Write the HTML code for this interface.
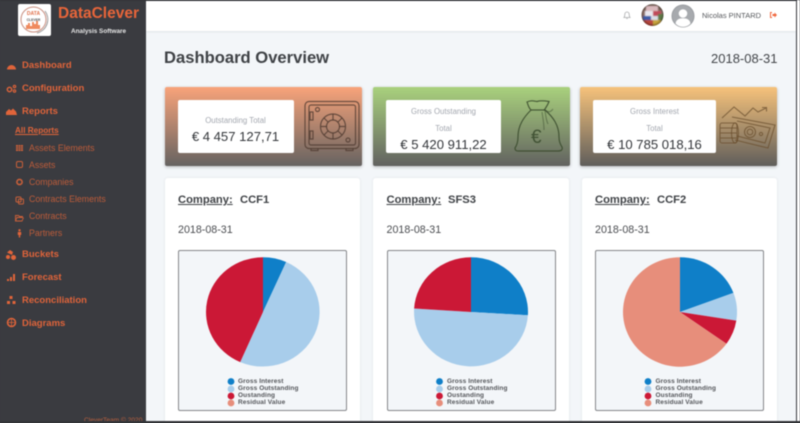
<!DOCTYPE html>
<html lang="en"><head><meta charset="utf-8"><title>DataClever</title>
<style>
html,body{margin:0;padding:0;width:800px;height:423px;overflow:hidden;background:#3a3b40}
body{font-family:"Liberation Sans",sans-serif;position:relative}
#w{position:absolute;left:0;top:0;width:800px;height:423px;overflow:hidden;filter:blur(.4px)}
.a{position:absolute;white-space:nowrap;line-height:1}
.box{position:absolute}
.m{color:#e0643a;font-weight:bold;font-size:9.5px;left:22px}
.s{color:#bd5c3a;font-size:8.8px;left:29px}
.i{position:absolute}
.card{position:absolute;top:87px;height:79px;border-radius:2px;box-shadow:0 1px 3px rgba(0,0,0,.25)}
.w{position:absolute;top:100px;height:53px;background:#fff;border-radius:2px}
.lab{color:#a4a8b0;font-size:7.8px;text-align:center}
.val{color:#33363a;font-size:13.1px;text-align:center}
.c{position:absolute;top:178px;height:250px;background:#fff;border-radius:3px;box-shadow:0 0 3px rgba(0,0,0,.08)}
.cb{position:absolute;top:250px;height:159px;background:#f3f6f9;border:1px solid #85878a;border-radius:2px}
.t{font-size:11.2px;font-weight:bold;color:#3f4246}
.d{font-size:10.7px;color:#4a4c50}
.l{font-size:6.5px;font-weight:bold;color:#55575b;letter-spacing:.1px}
</style></head><body><div id="w">
<div class="box" style="left:146px;top:1px;width:650px;height:421px;background:#f3f6f9"></div>
<div class="box" style="left:146px;top:1px;width:650px;height:30px;background:#fff;box-shadow:0 1px 2px rgba(0,0,0,.08)"></div>
<div class="box" style="left:0;top:0;width:146px;height:423px;background:#3a3b40"></div>
<div class="box" style="left:0;top:0;width:800px;height:1px;background:#333438"></div>
<div class="box" style="left:797px;top:0;width:3px;height:423px;background:#fff"></div>

<!-- logo -->
<div class="box" style="left:17.5px;top:3.5px;width:33.5px;height:32px;background:#fff;border-radius:2px"></div>
<svg class="i" style="left:17px;top:3px" width="35" height="33" viewBox="0 0 35 33">
<circle cx="16.5" cy="16.5" r="12.5" fill="none" stroke="#c98f80" stroke-width="1"/>
<path d="M28 8a14 14 0 0 1-8 22" fill="none" stroke="#999" stroke-width="1"/>
<text x="16.5" y="12" font-family="Liberation Sans" font-size="5" font-weight="bold" text-anchor="middle" fill="#e0704a">DATA</text>
<text x="16.5" y="18" font-family="Liberation Sans" font-size="3.4" font-weight="bold" text-anchor="middle" fill="#555">CLEVER</text>
<path d="M9 26v-4h2v-2h2v3h2v-4h2v2h2v-3h2v4h2v4z" fill="#ef8a5e"/>
</svg>
<div class="a" style="left:58px;top:6px;font-size:15.5px;font-weight:bold;color:#e8653a">DataClever</div>
<div class="a" style="left:71px;top:29px;font-size:6.4px;font-weight:bold;color:#e6e6e6">Analysis Software</div>

<!-- menu -->
<div class="a m" style="top:61px">Dashboard</div>
<div class="a m" style="top:84px">Configuration</div>
<div class="a m" style="top:107px">Reports</div>
<div class="a" style="left:15px;top:127px;font-size:8.2px;font-weight:bold;color:#e0643a;text-decoration:underline">All Reports</div>
<div class="a s" style="top:143.5px">Assets Elements</div>
<div class="a s" style="top:160.5px">Assets</div>
<div class="a s" style="top:178px">Companies</div>
<div class="a s" style="top:195px">Contracts Elements</div>
<div class="a s" style="top:212px">Contracts</div>
<div class="a s" style="top:229px">Partners</div>
<div class="a m" style="top:249.5px">Buckets</div>
<div class="a m" style="top:272.5px">Forecast</div>
<div class="a m" style="top:295.5px">Reconciliation</div>
<div class="a m" style="top:318.5px">Diagrams</div>
<div class="a" style="left:84px;top:418px;font-size:6.6px;color:#b8603e">CleverTeam © 2020</div>

<!-- menu icons -->
<svg class="i" style="left:0;top:55px" width="30" height="290" viewBox="0 55 30 290">
<g fill="#e0643a">
<path d="M7 69.500a4.500 4.500 0 1 1 9 0z"/>
<path d="M6 115v-3l3-3 2 1.500 2-2 3 3 1 3.500z"/>
<path d="M7 252.500l3-2.500 3 2-1 3zM6 257a2 2 0 1 1 4 0 2 2 0 0 1-4 0zM11 257.500a2.500 2.500 0 1 1 5 0 2.500 2.500 0 0 1-5 0z"/>
<path d="M7 281h2v-2h-2zM10 281h2v-4h-2zM13 281h2v-7h-2z"/>
<path d="M9.500 296h3v3h-3zM7 301h3v3H7zM12.500 301h3v3h-3z"/>
</g>
<circle cx="9.500" cy="89.500" r="2.200" fill="none" stroke="#e0643a" stroke-width="1.400"/>
<circle cx="14.500" cy="86.500" r="1.200" fill="none" stroke="#e0643a" stroke-width="1.100"/>
<circle cx="14.500" cy="91" r="1.200" fill="none" stroke="#e0643a" stroke-width="1.100"/>
<circle cx="11.500" cy="322.500" r="4" fill="none" stroke="#e0643a" stroke-width="1.500"/>
<path d="M7.500 322.500h8M11.500 318.500v8" stroke="#e0643a" stroke-width=".8"/>
</svg>
<svg class="i" style="left:14px;top:140px" width="14" height="100" viewBox="14 140 14 100">
<g fill="#c9603a">
<path d="M16 145h7v6h-7z"/>
<path d="M16 147h7M16 149h7M18.300 145v6M20.600 145v6" stroke="#3a3b40" stroke-width=".5"/>
</g>
<rect x="16.500" y="161.500" width="6" height="6" rx="1.500" fill="none" stroke="#c9603a" stroke-width="1"/>
<circle cx="19.500" cy="182" r="2.600" fill="none" stroke="#c9603a" stroke-width="1.600"/>
<rect x="16" y="197" width="5" height="5" rx="1" fill="none" stroke="#c9603a"/><rect x="18.500" y="199" width="5" height="5" rx="1" fill="none" stroke="#c9603a"/>
<path d="M15.500 221v-5.500h3l1 1h3v1h-5.500l-1.500 3.500h6.500l1.500-3.500" fill="none" stroke="#c9603a" stroke-width=".9"/>
<circle cx="19.500" cy="230.300" r="1.200" fill="#e0643a"/><path d="M17.800 232h3.400v3h-1v2.500h-1.400V235h-1z" fill="#e0643a"/>
</svg>

<!-- header -->
<svg class="i" style="left:622px;top:10px" width="10" height="10" viewBox="0 0 10 10"><path d="M2 7.500c.7-.8.8-1.500.8-3C2.800 3 3.800 2 5 2s2.200 1 2.200 2.500c0 1.500.1 2.200.8 3zM4.200 8.500h1.600" fill="none" stroke="#a9aaac" stroke-width=".8"/></svg>
<svg class="i" style="left:641px;top:4px" width="23" height="23" viewBox="0 0 23 23">
<defs><clipPath id="g"><circle cx="11.500" cy="11" r="11"/></clipPath>
<filter id="f" x="-10%" y="-10%" width="120%" height="120%"><feGaussianBlur stdDeviation=".5"/></filter>
<radialGradient id="sh" cx="50%" cy="45%" r="55%"><stop offset=".7" stop-color="#000" stop-opacity="0"/><stop offset="1" stop-color="#2a2018" stop-opacity=".55"/></radialGradient></defs>
<g clip-path="url(#g)">
<g filter="url(#f)">
<rect width="23" height="23" fill="#8a6d66"/>
<rect x="0" y="0" width="23" height="6" fill="#6e5a50"/>
<rect x="5" y="2" width="12" height="5" fill="#d9b8bc"/>
<rect x="4" y="7" width="9" height="5" fill="#e9e7ee"/>
<rect x="12" y="7" width="8" height="5" fill="#c0485a"/>
<rect x="2" y="12" width="8" height="4" fill="#3b5ba8"/>
<rect x="10" y="12" width="7" height="4" fill="#d8dde8"/>
<rect x="17" y="10" width="6" height="7" fill="#5e7a48"/>
<rect x="3" y="16" width="9" height="6" fill="#b8473c"/>
<rect x="12" y="16" width="8" height="6" fill="#c8a53e"/>
</g>
<rect width="23" height="23" fill="url(#sh)"/>
</g></svg>
<svg class="i" style="left:671px;top:4px" width="24" height="24" viewBox="0 0 24 24">
<circle cx="12" cy="12" r="11" fill="#a7aaae" stroke="#9b9ea2" stroke-width="1"/>
<circle cx="12" cy="9.500" r="4.300" fill="#fff"/>
<path d="M4.500 19.500c.5-3.800 3.500-5.300 7.500-5.300s7 1.500 7.500 5.300a10 10 0 0 1-15 0z" fill="#fff"/></svg>
<div class="a" style="left:702px;top:11.500px;font-size:7.500px;color:#56585c">Nicolas PINTARD</div>
<svg class="i" style="left:769px;top:11px" width="9" height="8" viewBox="0 0 9 8"><path d="M1 1h2v1H2v4h1v1H1zM3.500 3h2V1.500L8 4 5.500 6.500V5h-2z" fill="#f0663c"/></svg>

<div class="a" style="left:164px;top:50px;font-size:16.6px;font-weight:bold;color:#3f4246">Dashboard Overview</div>
<div class="a" style="left:711px;top:51.500px;font-size:13px;color:#43464a">2018-08-31</div>

<!-- KPI cards -->
<div class="card" style="left:165px;width:197px;background:linear-gradient(#f8a37a,#666361)"></div>
<div class="card" style="left:372.500px;width:197.500px;background:linear-gradient(#a9d17d,#626260)"></div>
<div class="card" style="left:580px;width:197px;background:linear-gradient(#f6c27b,#605e5b)"></div>
<div class="w" style="left:178px;width:115.500px"></div>
<div class="w" style="left:386px;width:115px"></div>
<div class="w" style="left:593px;width:123px"></div>

<div class="a lab" style="left:178px;width:115px;top:116.500px">Outstanding Total</div>
<div class="a val" style="left:178px;width:115px;top:129.500px">€ 4 457 127,71</div>
<div class="a lab" style="left:386px;width:115px;top:108px">Gross Outstanding</div>
<div class="a lab" style="left:386px;width:115px;top:125px">Total</div>
<div class="a val" style="left:386px;width:115px;top:138px">€ 5 420 911,22</div>
<div class="a lab" style="left:593px;width:123px;top:108px">Gross Interest</div>
<div class="a lab" style="left:593px;width:123px;top:125px">Total</div>
<div class="a val" style="left:593px;width:123px;top:138px">€ 10 785 018,16</div>

<svg class="i" style="left:300px;top:96px" width="64" height="60" viewBox="300 96 64 60" fill="none" stroke="#4e3a30" stroke-opacity=".78" stroke-width="1.200">
<rect x="305" y="101.500" width="54" height="47" rx="4"/>
<rect x="309" y="105" width="46.500" height="40" rx="2"/>
<path d="M311 148.500v2h7v-2M346 148.500v2h7v-2M310 112h3v8h-3zM310 131h3v8h-3z"/>
<circle cx="333" cy="126.500" r="12.500"/><circle cx="333" cy="126.500" r="6.500"/>
<path d="M333 114v6M333 133v6M321 126.500h6M339 126.500h6M324 118l4 4M338 131l4 4M342 118l-4 4M328 131l-4 4"/>
<circle cx="317.500" cy="109.500" r="2"/><circle cx="348" cy="140" r="2"/>
</svg>
<svg class="i" style="left:510px;top:94px" width="60" height="62" viewBox="510 94 60 62" fill="none" stroke="#384a2c" stroke-opacity=".85" stroke-width="1.200">
<path d="M531 110c-3-3-3-6-4-8 4-2 7-1 10-.5 3-1 6-1 12 0-1 3-3 6-5 9"/>
<path d="M531 110h14"/>
<path d="M531 110c-7 7-13 15-13 27 0 5-1 8-3 11 0 3 2 3 4 3h39c3 0 5-1 4-4-2-3-3-6-3-10 0-12-6-20-14-27"/>
<path d="M545 110c3 2 5 3 8-1M545 111c1 5 1 9 3 13M542 112c1 7 2 11 2 18" stroke-opacity=".45"/>
</svg>
<div class="a" style="left:531px;top:128px;font-size:19px;color:#384a2c;opacity:.85">€</div>
<svg class="i" style="left:716px;top:102px" width="64" height="54" viewBox="716 102 64 54" fill="none" stroke="#6a4d2c" stroke-opacity=".72" stroke-width="1.100">
<path d="M722 118l12-11 11 9 8-8 5 4 8-4M762 107.500h4.500v4"/>
<path d="M732 117l43 8-7 23-33-8"/>
<path d="M737 121l33 7-5 15-28-7"/>
<circle cx="750" cy="132" r="5.500"/><circle cx="750" cy="132" r="2.800"/><circle cx="761" cy="134" r="1.600"/>
<path d="M722 123h13a2 2 0 0 1 2 2v16a2 2 0 0 1-2 2h-13a2 2 0 0 1-2-2v-16a2 2 0 0 1 2-2zM720 128h17M720 133h17M720 138h17"/>
<ellipse cx="735" cy="133" rx="3.500" ry="10"/>
</svg>

<!-- company cards -->
<div class="c" style="left:165px;width:195px"></div>
<div class="c" style="left:373px;width:196px"></div>
<div class="c" style="left:582px;width:195px"></div>

<div class="a t" style="left:178px;top:195px"><span style="text-decoration:underline">Company:</span></div>
<div class="a t" style="left:240px;top:195px">CCF1</div>
<div class="a d" style="left:178px;top:224.500px">2018-08-31</div>
<div class="cb" style="left:178px;width:167px"></div>

<div class="a t" style="left:386.500px;top:195px"><span style="text-decoration:underline">Company:</span></div>
<div class="a t" style="left:448px;top:195px">SFS3</div>
<div class="a d" style="left:386.500px;top:224.500px">2018-08-31</div>
<div class="cb" style="left:386.500px;width:167px"></div>

<div class="a t" style="left:595px;top:195px"><span style="text-decoration:underline">Company:</span></div>
<div class="a t" style="left:657px;top:195px">CCF2</div>
<div class="a d" style="left:595px;top:224.500px">2018-08-31</div>
<div class="cb" style="left:595px;width:167px"></div>

<svg class="i" style="left:0;top:0" width="800" height="423" viewBox="0 0 800 423">
<g transform="translate(0 312) scale(1 .96) translate(0 -312)">
<path d="M263 312V255A57 57 0 0 1 286.180 259.930Z" fill="#0f7fc8"/>
<path d="M263 312L286.180 259.930A57 57 0 0 1 240.180 364.230Z" fill="#a8cdeb"/>
<path d="M263 312L240.180 364.230A57 57 0 0 1 263 255Z" fill="#cb1836"/>

<path d="M471 312V255A57 57 0 0 1 527.900 315.380Z" fill="#0f7fc8"/>
<path d="M471 312L527.900 315.380A57 57 0 0 1 414.120 308.320Z" fill="#a8cdeb"/>
<path d="M471 312L414.120 308.320A57 57 0 0 1 471 255Z" fill="#cb1836"/>

<path d="M680 312V255A57 57 0 0 1 733.430 292.130Z" fill="#0f7fc8"/>
<path d="M680 312L733.430 292.130A57 57 0 0 1 736.300 320.920Z" fill="#a8cdeb"/>
<path d="M680 312L736.300 320.920A57 57 0 0 1 726.460 345.020Z" fill="#cb1836"/>
<path d="M680 312L726.460 345.020A57 57 0 1 1 680 255Z" fill="#e78e7b"/>
</g>
<g id="dots">
<circle cx="231" cy="381.500" r="3.400" fill="#0f7fc8"/><circle cx="231" cy="389" r="3.400" fill="#a8cdeb"/><circle cx="231" cy="396" r="3.400" fill="#cb1836"/><circle cx="231" cy="403" r="3.400" fill="#e78e7b"/>
<circle cx="439.500" cy="381.500" r="3.400" fill="#0f7fc8"/><circle cx="439.500" cy="389" r="3.400" fill="#a8cdeb"/><circle cx="439.500" cy="396" r="3.400" fill="#cb1836"/><circle cx="439.500" cy="403" r="3.400" fill="#e78e7b"/>
<circle cx="648" cy="381.500" r="3.400" fill="#0f7fc8"/><circle cx="648" cy="389" r="3.400" fill="#a8cdeb"/><circle cx="648" cy="396" r="3.400" fill="#cb1836"/><circle cx="648" cy="403" r="3.400" fill="#e78e7b"/>
</g>
</svg>

<div class="a l" style="left:238px;top:378.500px">Gross Interest</div>
<div class="a l" style="left:238px;top:386px">Gross Outstanding</div>
<div class="a l" style="left:238px;top:393px">Oustanding</div>
<div class="a l" style="left:238px;top:400px">Residual Value</div>
<div class="a l" style="left:447px;top:378.500px">Gross Interest</div>
<div class="a l" style="left:447px;top:386px">Gross Outstanding</div>
<div class="a l" style="left:447px;top:393px">Oustanding</div>
<div class="a l" style="left:447px;top:400px">Residual Value</div>
<div class="a l" style="left:655.500px;top:378.500px">Gross Interest</div>
<div class="a l" style="left:655.500px;top:386px">Gross Outstanding</div>
<div class="a l" style="left:655.500px;top:393px">Oustanding</div>
<div class="a l" style="left:655.500px;top:400px">Residual Value</div>

<div class="box" style="left:0;top:421px;width:800px;height:2px;background:#333438"></div>
</div></body></html>
